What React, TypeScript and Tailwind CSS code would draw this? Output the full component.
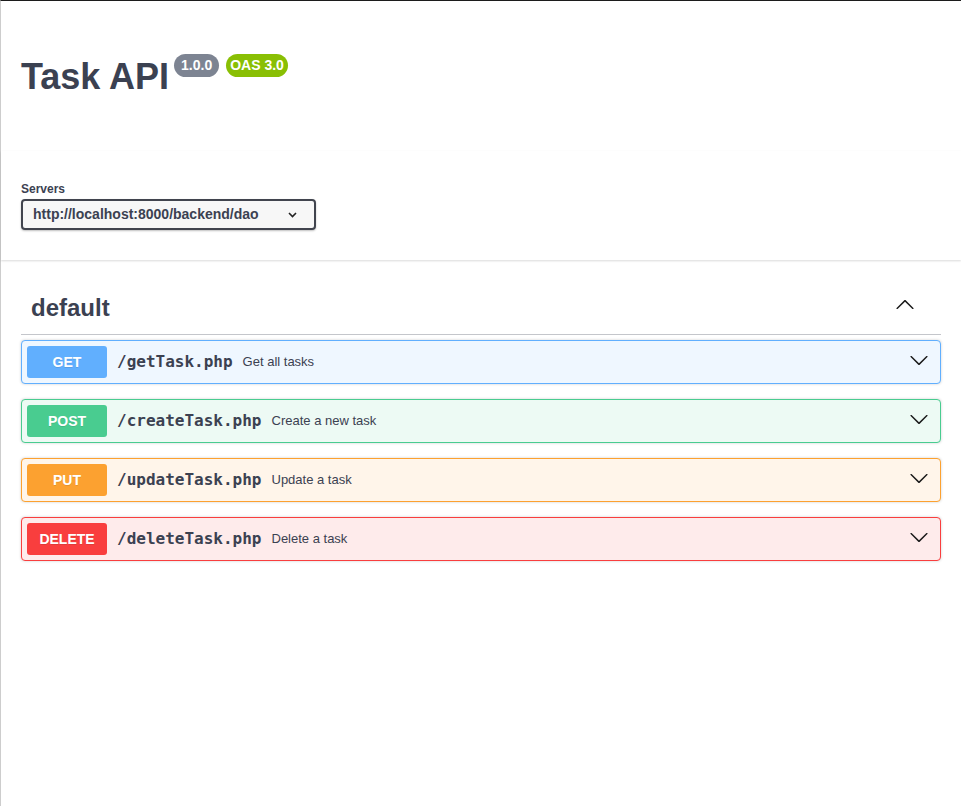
const ops = [
  {
    method: "GET",
    path: "/getTask.php",
    desc: "Get all tasks",
    box: "border-[#61affe] bg-[#eff7ff]",
    badge: "bg-[#61affe]",
  },
  {
    method: "POST",
    path: "/createTask.php",
    desc: "Create a new task",
    box: "border-[#49cc90] bg-[#edfaf4]",
    badge: "bg-[#49cc90]",
  },
  {
    method: "PUT",
    path: "/updateTask.php",
    desc: "Update a task",
    box: "border-[#fca130] bg-[#fff5ea]",
    badge: "bg-[#fca130]",
  },
  {
    method: "DELETE",
    path: "/deleteTask.php",
    desc: "Delete a task",
    box: "border-[#f93e3e] bg-[#feebeb]",
    badge: "bg-[#f93e3e]",
  },
];

const Chevron = ({ up = false, className = "" }: { up?: boolean; className?: string }) => (
  <svg
    width="20"
    height="20"
    viewBox="0 0 20 20"
    className={`${up ? "rotate-180" : ""} ${className}`}
    fill="#1a1a1a"
  >
    <path d="M17.418 6.109c.272-.268.709-.268.979 0s.271.701 0 .969l-7.908 7.83c-.27.268-.707.268-.979 0l-7.908-7.830c-.27-.268-.27-.701 0-.969.271-.268.709-.268.979 0L10 13.25l7.418-7.141z" />
  </svg>
);

const App = () => {
  return (
    <div
      className="min-h-[806px] w-[961px] bg-white border-t border-t-[#1c1c1c] border-l border-l-[#cdcdcd] text-[#3b4151]"
      style={{ fontFamily: '"Liberation Sans", Arial, sans-serif' }}
    >
      {/* info */}
      <div className="h-[150px] px-5 pt-[53px]">
        <div className="flex items-start">
          <h2 className="mt-[2px] text-[36px] leading-[41px] font-bold text-[#3b4151]">Task API</h2>
          <span className="ml-[5px] h-[23px] rounded-full bg-[#7d8492] px-[7px] text-[14px] leading-[23px] font-bold text-white">
            1.0.0
          </span>
          <span className="ml-[7px] h-[23px] rounded-full bg-[#89bf04] px-[4px] text-[14px] leading-[23px] font-bold text-white">
            OAS 3.0
          </span>
        </div>
      </div>

      {/* servers */}
      <div className="bg-white px-5 pt-[31px] pb-[30px] shadow-[0_1px_2px_0_rgba(0,0,0,0.15)]">
        <div className="text-[12px] leading-[15px] font-bold">Servers</div>
        <div className="mt-[2px] flex h-[31px] w-[295px] items-center justify-between rounded-[4px] border-2 border-[#41444e] bg-[#f7f7f7] pl-[10px] pr-[17px] shadow-[0_1px_2px_0_rgba(0,0,0,0.25)]">
          <span className="text-[14px] font-bold">http://localhost:8000/backend/dao</span>
          <svg width="9" height="6" viewBox="0 0 9 6" fill="none" stroke="#222" strokeWidth="1.6">
            <path d="M1 1l3.5 3.5L8 1" />
          </svg>
        </div>
      </div>

      {/* operations */}
      <div className="px-5">
        <div className="flex items-center justify-between border-b border-[#c4c6cb] pl-[10px] pt-[33px] pb-[12px]">
          <h3 className="text-[24px] leading-[29px] font-bold">default</h3>
          <Chevron up className="mr-[26px] mb-[6px]" />
        </div>

        <div className="mt-[5px] flex flex-col gap-[15px]">
          {ops.map((op) => (
            <div
              key={op.method}
              className={`flex h-[44px] items-center rounded-[4px] border px-[5px] shadow-[0_0_3px_rgba(0,0,0,0.19)] ${op.box}`}
            >
              <span
                className={`flex h-[32px] w-[80px] items-center justify-center rounded-[3px] text-[14px] font-bold text-white [text-shadow:0_1px_0_rgba(0,0,0,0.1)] ${op.badge}`}
              >
                {op.method}
              </span>
              <span
                className="ml-[10px] text-[16px] font-bold text-[#3b4151]"
                style={{ fontFamily: '"DejaVu Sans Mono", monospace' }}
              >
                {op.path}
              </span>
              <span className="ml-[10px] text-[13px] text-[#3b4151]">{op.desc}</span>
              <Chevron className="ml-auto mr-[6px] mb-[4px]" />
            </div>
          ))}
        </div>
      </div>
    </div>
  );
};

export default App;
